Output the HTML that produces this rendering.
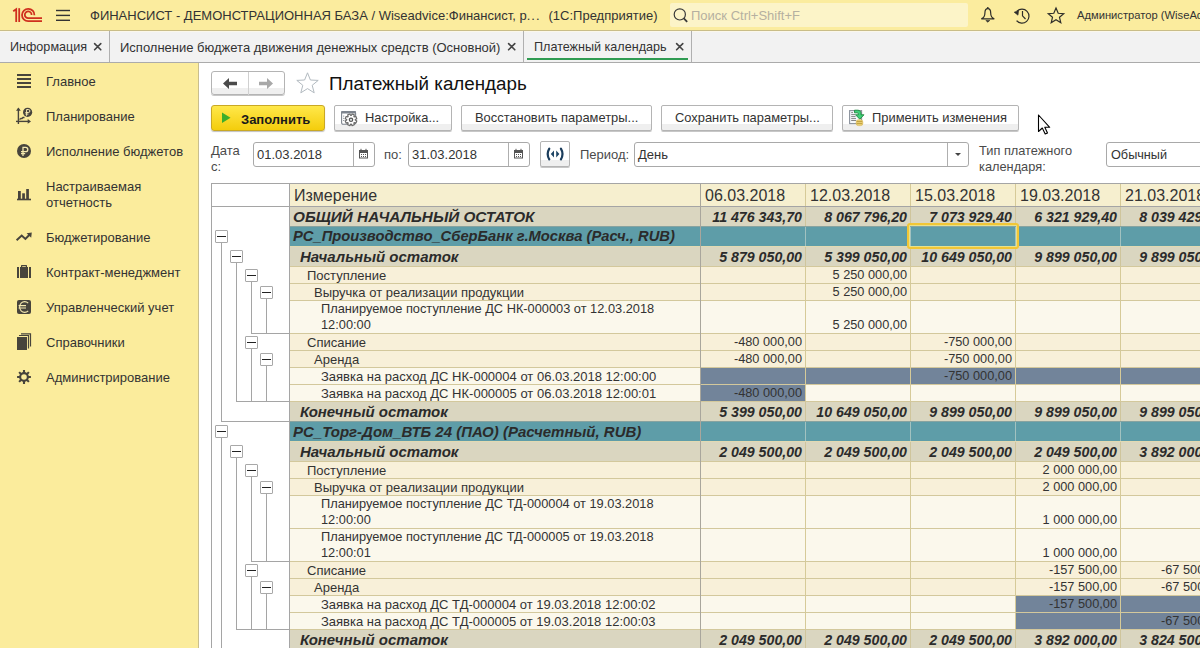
<!DOCTYPE html><html><head><meta charset="utf-8"><style>
*{box-sizing:border-box;margin:0;padding:0}
html,body{width:1200px;height:648px;overflow:hidden;background:#fff;font-family:"Liberation Sans",sans-serif;color:#333}
.abs{position:absolute}
.t{position:absolute;white-space:nowrap;line-height:1}
.btn{position:absolute;border:1px solid #B4B4B4;border-radius:2px;background:linear-gradient(#fff 0,#fff 74%,#EFEFEF 74%,#EFEFEF 100%);box-shadow:0 1px 0 rgba(0,0,0,.22)}
.fld{position:absolute;border:1px solid #A9A9A9;border-radius:3px;background:#fff}
.r{position:absolute;left:290px;width:910px}
.c{position:absolute;top:0;height:100%}
</style></head><body>

<div class="abs" style="left:0;top:0;width:1200px;height:31px;background:#FBEC9E;border-bottom:1px solid #C9BD88"></div>
<svg class="abs" style="left:0;top:0" width="80" height="30" viewBox="0 0 80 30">
<g fill="none" stroke="#CF2F1E" stroke-width="1.8">
<path d="M34.4 15.2 A6.2 6.2 0 1 0 28.2 21.2 H42"/>
<path d="M31.6 15 A3.4 3.4 0 1 0 28.2 18.2 H42"/>
<path d="M13.2 11.3 L16.2 9.2 V22"/>
<path d="M19.2 8.2 V22"/>
</g>
<g fill="#333"><rect x="56" y="9.8" width="14" height="1.4"/><rect x="56" y="14.7" width="14" height="1.4"/><rect x="56" y="19.6" width="14" height="1.4"/></g>
</svg>
<div class="t" style="left:90px;top:9px;font-size:13px;color:#333;white-space:pre">ФИНАНСИСТ - ДЕМОНСТРАЦИОННАЯ БАЗА / Wiseadvice:Финансист, р<span style="letter-spacing:1px">...</span></div>
<div class="t" style="left:548.5px;top:9px;font-size:13px;color:#333;white-space:pre">(1С:Предприятие)</div>
<div class="abs" style="left:670px;top:3px;width:298px;height:24px;background:#FCF4C8;border-radius:2px"></div>
<svg class="abs" style="left:670px;top:3px" width="24" height="24"><circle cx="9.8" cy="11.4" r="5.6" fill="none" stroke="#3A3A3A" stroke-width="1.2"/><path d="M13.8 15.4 L17.2 18.8" stroke="#3A3A3A" stroke-width="1.8"/></svg>
<div class="t" style="left:691px;top:9px;font-size:13px;color:#B5B0A0">Поиск Ctrl+Shift+F</div>
<svg class="abs" style="left:975px;top:3px" width="100" height="24" fill="none" stroke="#2E2E2A" stroke-width="1.2">
<path d="M12.8 5.6 C10.6 5.6 9.9 7.6 9.9 10 C9.9 13.6 9 14.9 6.3 15.9 H19.3 C16.6 14.9 15.7 13.6 15.7 10 C15.7 7.6 15 5.6 12.8 5.6 Z"/>
<path d="M10.8 17.4 H14.8 L12.8 19.2 Z" fill="#2E2E2A" stroke-width="0.6"/><circle cx="12.8" cy="4.8" r="0.9" fill="#2E2E2A" stroke="none"/>
<path d="M42 8.2 A7 7 0 1 1 41.6 17.6"/><path d="M47.5 8 V12.8 L50.5 16"/><path d="M39.2 9.2 L43.6 7.6 L43 12.2 Z" fill="#2E2E2A" stroke-width="0.6"/>
<path d="M81 5 L83.2 10.3 L88.7 10.7 L84.5 14.3 L85.8 19.8 L81 16.8 L76.2 19.8 L77.5 14.3 L73.3 10.7 L78.8 10.3 Z"/>
</svg>
<div class="t" style="left:1077px;top:9.5px;font-size:11.2px;color:#333">Администратор (WiseAdvice)</div>
<div class="abs" style="left:0;top:31px;width:1200px;height:32px;background:#F2F2F2;border-top:1px solid #FBF7EA;border-bottom:1px solid #ABABAB"></div>
<div class="t" style="left:10px;top:40.7px;font-size:12.6px;color:#333">Информация</div>
<svg class="abs" style="left:92px;top:42px" width="10" height="10"><path d="M2.6 1.6 L8.8 7.8 M8.8 1.6 L2.6 7.8" stroke="#444" stroke-width="1.6" stroke-linecap="round"/></svg>
<div class="abs" style="left:109px;top:31px;width:1px;height:31px;background:#B0B0B0"></div>
<div class="t" style="left:120px;top:40.7px;font-size:13px;color:#333">Исполнение бюджета движения денежных средств (Основной)</div>
<svg class="abs" style="left:506px;top:42px" width="10" height="10"><path d="M2.6 1.6 L8.8 7.8 M8.8 1.6 L2.6 7.8" stroke="#444" stroke-width="1.6" stroke-linecap="round"/></svg>
<div class="abs" style="left:523px;top:31px;width:1px;height:31px;background:#B0B0B0"></div>
<div class="t" style="left:534px;top:40.7px;font-size:12.6px;color:#333">Платежный календарь</div>
<svg class="abs" style="left:674px;top:42px" width="10" height="10"><path d="M2.6 1.6 L8.8 7.8 M8.8 1.6 L2.6 7.8" stroke="#444" stroke-width="1.6" stroke-linecap="round"/></svg>
<div class="abs" style="left:691px;top:31px;width:1px;height:31px;background:#B0B0B0"></div>
<div class="abs" style="left:527px;top:58px;width:161px;height:2px;background:#2F9B52"></div>
<div class="abs" style="left:0;top:63px;width:199px;height:585px;background:#FBEC9C;border-right:1px solid #C9BE8E"></div>
<div class="t" style="left:46px;top:75.4px;font-size:13px;color:#333">Главное</div>
<div class="t" style="left:46px;top:110.4px;font-size:13px;color:#333">Планирование</div>
<div class="t" style="left:46px;top:145.4px;font-size:13px;color:#333">Исполнение бюджетов</div>
<div class="abs" style="left:46px;top:179.3px;font-size:13px;line-height:16px;color:#333;white-space:nowrap">Настраиваемая<br>отчетность</div>
<div class="t" style="left:46px;top:231.4px;font-size:13px;color:#333">Бюджетирование</div>
<div class="t" style="left:46px;top:266.4px;font-size:13px;color:#333">Контракт-менеджмент</div>
<div class="t" style="left:46px;top:301.4px;font-size:13px;color:#333">Управленческий учет</div>
<div class="t" style="left:46px;top:336.4px;font-size:13px;color:#333">Справочники</div>
<div class="t" style="left:46px;top:371.4px;font-size:13px;color:#333">Администрирование</div>
<svg class="abs" style="left:0;top:62px" width="40" height="340">
<g fill="#47443C">
<rect x="17" y="12" width="14" height="2"/><rect x="17" y="16" width="14" height="2"/><rect x="17" y="20" width="14" height="2"/><rect x="17" y="24" width="14" height="2"/>
</g>
<g fill="none" stroke="#47443C" stroke-width="1.4">
<path d="M18.4 46.5 V62"/><path d="M16 59.4 H29"/><path d="M19.5 57.5 L21 56.5 L22 56.5 L23 55.5 L24.5 55.5"/>
</g>
<path d="M18.4 45.5 L16 48.8 H20.8 Z M31 59.4 L27.7 57 V61.8 Z" fill="#47443C"/>
<circle cx="27.6" cy="50.3" r="4.6" fill="#47443C"/>
<path d="M26.6 53.8 V47.5 H28.4 A1.5 1.5 0 0 1 28.4 50.5 H25.4 M25.4 52 H28.4" fill="none" stroke="#F5E9B0" stroke-width="1"/>
<circle cx="24" cy="89" r="7" fill="#47443C"/>
<path d="M23 94 V85.3 H25.6 A2.2 2.2 0 0 1 25.6 89.7 H21 M21 91.7 H25.2" fill="none" stroke="#F5E9B0" stroke-width="1.3"/>
<g fill="#47443C"><rect x="18" y="129" width="2.8" height="8.5"/><rect x="22.2" y="131.3" width="2.7" height="6.2"/><rect x="26.2" y="127" width="2.7" height="10.5"/><rect x="17" y="136.7" width="14" height="1.6"/></g>
<path d="M16.6 178.3 L21.7 173.6 L25.4 176.9 L29.5 172.8" fill="none" stroke="#47443C" stroke-width="2"/>
<path d="M31.8 170.6 L26.6 171.3 L31.2 175.7 Z" fill="#47443C"/>
<g fill="#47443C"><rect x="17" y="205" width="2" height="11" /><rect x="20" y="205" width="8" height="11"/><rect x="29" y="205" width="2" height="11"/><path d="M21 205 V203.4 Q21 203 21.6 203 H26.4 Q27 203 27 203.6 V205 H25.8 V204.2 H22.2 V205 Z"/></g>
<rect x="17" y="238" width="14" height="14" rx="2" fill="#47443C"/>
<path d="M28.2 241.2 A5 5.4 0 1 0 28.2 248.8 M18.6 243.6 H26 M18.6 246 H26" fill="none" stroke="#F5E9B0" stroke-width="1.1"/>
<rect x="17" y="275" width="10" height="13" fill="#47443C"/>
<path d="M28.5 286.5 V273.5 H19 M30.5 284.5 V271.8 H21" fill="none" stroke="#47443C" stroke-width="1.2"/>
</svg>
<svg class="abs" style="left:0;top:62px" width="40" height="340"><circle cx="24" cy="315" r="3.85" fill="none" stroke="#47443C" stroke-width="2.1"/><path d="M28.00 315.00 L30.90 315.00 M26.83 317.83 L28.88 319.88 M24.00 319.00 L24.00 321.90 M21.17 317.83 L19.12 319.88 M20.00 315.00 L17.10 315.00 M21.17 312.17 L19.12 310.12 M24.00 311.00 L24.00 308.10 M26.83 312.17 L28.88 310.12" stroke="#47443C" stroke-width="2.1"/></svg>
<div class="btn" style="left:211px;top:71px;width:74px;height:24px;border-radius:3px"></div>
<div class="abs" style="left:248px;top:72px;width:1px;height:23px;background:#D0D0D0"></div>
<svg class="abs" style="left:211px;top:71px" width="74" height="25">
<path d="M12 12.5 L18 7 V10.7 H26 V14.3 H18 V18 Z" fill="#4A4A4A"/>
<path d="M62 12.5 L56 7 V10.7 H48 V14.3 H56 V18 Z" fill="#A8A8A8"/>
</svg>
<svg class="abs" style="left:294px;top:70px" width="28" height="26"><path d="M13.5 2.8 L16.4 10 L24.2 10.4 L18.2 15.3 L20.2 22.8 L13.5 18.6 L6.8 22.8 L8.8 15.3 L2.8 10.4 L10.6 10 Z" fill="none" stroke="#B2BAC0" stroke-width="1"/></svg>
<div class="t" style="left:329px;top:75.2px;font-size:18.8px;color:#111">Платежный календарь</div>

<div class="abs" style="left:211px;top:105px;width:114px;height:26px;border:1px solid #C9A825;border-radius:3px;background:linear-gradient(#FFE84A,#F4CD0C);box-shadow:0 1px 1px rgba(0,0,0,.25)"></div>
<svg class="abs" style="left:211px;top:105px" width="30" height="26"><path d="M11 7.5 L19.5 12.8 L11 18 Z" fill="#3DAE2B"/></svg>
<div class="t" style="left:241px;top:112.5px;font-size:13px;font-weight:bold;color:#1A1A1A">Заполнить</div>

<div class="btn" style="left:334px;top:105px;width:118px;height:26px"></div>
<div class="t" style="left:365px;top:112.3px;font-size:12.9px;color:#333">Настройка...</div>
<svg class="abs" style="left:336px;top:106px" width="26" height="24">
<rect x="5.6" y="5.6" width="14" height="12.6" rx="1.5" fill="none" stroke="#7D848E" stroke-width="1.1"/>
<rect x="5" y="5" width="15" height="2.4" rx="1" fill="#7D848E"/>
<g fill="#7A808A"><rect x="7.2" y="9.6" width="1" height="1"/><rect x="7.2" y="11.8" width="1" height="1"/><rect x="7.2" y="14" width="1" height="1"/></g>
<path d="M19.29 14.03 L20.79 14.93 L19.89 17.10 L18.20 16.68 L17.88 17.00 L18.30 18.69 L16.13 19.59 L15.23 18.09 L14.77 18.09 L13.87 19.59 L11.70 18.69 L12.12 17.00 L11.80 16.68 L10.11 17.10 L9.21 14.93 L10.71 14.03 L10.71 13.57 L9.21 12.67 L10.11 10.50 L11.80 10.92 L12.12 10.60 L11.70 8.91 L13.87 8.01 L14.77 9.51 L15.23 9.51 L16.13 8.01 L18.30 8.91 L17.88 10.60 L18.20 10.92 L19.89 10.50 L20.79 12.67 L19.29 13.57 Z" fill="#fff" stroke="#6A6A6A" stroke-width="1.2" stroke-linejoin="round"/>
<circle cx="15" cy="13.8" r="1.7" fill="#DDE4E4" stroke="#555" stroke-width="1.2"/>
</svg>
<div class="btn" style="left:461px;top:105px;width:191px;height:26px"></div>
<div class="t" style="left:475px;top:112.3px;font-size:12.9px;color:#333">Восстановить параметры...</div>
<div class="btn" style="left:661px;top:105px;width:172px;height:26px"></div>
<div class="t" style="left:675px;top:112.3px;font-size:12.9px;color:#333">Сохранить параметры...</div>
<div class="btn" style="left:842px;top:105px;width:177px;height:26px"></div>
<div class="t" style="left:872px;top:112.3px;font-size:12.9px;color:#333">Применить изменения</div>
<svg class="abs" style="left:844px;top:106px" width="26" height="24">
<rect x="5.6" y="4.6" width="12" height="13" fill="#F6F9FC" stroke="#8A929C" stroke-width="1.1"/>
<path d="M7.2 6.6 H9 M7.2 8.6 H11.5 M7.2 10.6 H11.5 M7.2 12.6 H12 M7.2 14.5 H12" stroke="#777" stroke-width="0.9"/>
<path d="M10.5 4.2 H13.8 C16 4.2 17 5.6 17 7.8 V8.8 H20 L15.8 13.2 L11.6 8.8 H14.4 V8 C14.4 7.2 14 6.8 13.2 6.8 H10.5 Z" fill="#3FD07A" stroke="#1E8A3E" stroke-width="0.9" stroke-linejoin="round"/>
<rect x="12.2" y="13.8" width="6.6" height="5.8" rx="2.2" fill="#EAD27A" stroke="#D7B24A" stroke-width="0.6"/>
<path d="M12.8 15.6 H18.2 M12.8 17.6 H18.2" stroke="#B8962E" stroke-width="0.8"/>
</svg>
<svg class="abs" style="left:1036px;top:113px" width="18" height="24"><path d="M2.5 2 V18.5 L6.3 15 L9.2 21 L11.5 20 L8.8 14.3 L13.7 14.3 Z" fill="#fff" stroke="#000" stroke-width="1.1" stroke-linejoin="round"/></svg>
<div class="abs" style="left:211px;top:143px;font-size:13px;line-height:16px;color:#4A4A4A">Дата<br>с:</div>
<div class="fld" style="left:253px;top:142px;width:122px;height:25px"></div>
<div class="abs" style="left:353px;top:143px;width:1px;height:23px;background:#AFAFAF"></div>
<div class="t" style="left:257px;top:148px;font-size:13px;color:#333">01.03.2018</div>
<svg class="abs" style="left:358px;top:148px" width="12" height="12"><rect x="1" y="2" width="9" height="8.5" fill="#555"/><rect x="2" y="5" width="7" height="4.5" fill="#fff"/><g fill="#555"><rect x="3" y="6" width="1" height="1"/><rect x="5" y="6" width="1" height="1"/><rect x="7" y="6" width="1" height="1"/><rect x="3" y="8" width="1" height="1"/><rect x="5" y="8" width="1" height="1"/><rect x="7" y="8" width="1" height="1"/></g><rect x="2.5" y="0.8" width="1" height="2" fill="#555"/><rect x="7.5" y="0.8" width="1" height="2" fill="#555"/></svg>
<div class="t" style="left:384px;top:148px;font-size:13px;color:#4A4A4A">по:</div>
<div class="fld" style="left:408px;top:142px;width:122px;height:25px"></div>
<div class="abs" style="left:508px;top:143px;width:1px;height:23px;background:#AFAFAF"></div>
<div class="t" style="left:412px;top:148px;font-size:13px;color:#333">31.03.2018</div>
<svg class="abs" style="left:513px;top:148px" width="12" height="12"><rect x="1" y="2" width="9" height="8.5" fill="#555"/><rect x="2" y="5" width="7" height="4.5" fill="#fff"/><g fill="#555"><rect x="3" y="6" width="1" height="1"/><rect x="5" y="6" width="1" height="1"/><rect x="7" y="6" width="1" height="1"/><rect x="3" y="8" width="1" height="1"/><rect x="5" y="8" width="1" height="1"/><rect x="7" y="8" width="1" height="1"/></g><rect x="2.5" y="0.8" width="1" height="2" fill="#555"/><rect x="7.5" y="0.8" width="1" height="2" fill="#555"/></svg>
<div class="btn" style="left:540px;top:141px;width:30px;height:26px"></div>
<svg class="abs" style="left:540px;top:141px" width="30" height="26"><path d="M9.3 7.6 Q6.1 13 9.3 18.4 M20.9 7.6 Q24.1 13 20.9 18.4" fill="none" stroke="#1B3D5C" stroke-width="2.2" stroke-linecap="round"/><path d="M14 9.4 L10.8 13 L14 16.4 Z M16.2 9.4 L19.4 13 L16.2 16.4 Z" fill="#1F4666"/></svg>
<div class="t" style="left:580px;top:148px;font-size:13px;color:#4A4A4A">Период:</div>
<div class="fld" style="left:634px;top:142px;width:335px;height:25px"></div>
<div class="abs" style="left:947px;top:143px;width:1px;height:23px;background:#AFAFAF"></div>
<div class="t" style="left:638px;top:148px;font-size:13px;color:#333">День</div>
<svg class="abs" style="left:952.5px;top:150px" width="10" height="8"><path d="M2 3 H8 L5 6 Z" fill="#444"/></svg>
<div class="abs" style="left:979px;top:142.8px;font-size:12.8px;line-height:16px;color:#4A4A4A;white-space:nowrap">Тип платежного<br>календаря:</div>
<div class="fld" style="left:1106px;top:142px;width:110px;height:25px"></div>
<div class="t" style="left:1111px;top:148.8px;font-size:12.7px;color:#333">Обычный</div>
<div class="abs" style="left:211px;top:183px;width:989px;height:465px;background:#fff;border-left:1px solid #A5A5A5;border-top:1px solid #A5A5A5"></div>
<div class="abs" style="left:290px;top:184px;width:910px;height:22px;background:#F6EFCF"></div>
<div class="abs" style="left:211px;top:206px;width:989px;height:1px;background:#A5A5A5"></div>
<div class="t" style="left:294px;top:188px;font-size:16px;color:#333">Измерение</div>
<div class="t" style="left:705px;top:188px;font-size:16px;color:#333">06.03.2018</div>
<div class="t" style="left:810px;top:188px;font-size:16px;color:#333">12.03.2018</div>
<div class="t" style="left:915px;top:188px;font-size:16px;color:#333">15.03.2018</div>
<div class="t" style="left:1020px;top:188px;font-size:16px;color:#333">19.03.2018</div>
<div class="t" style="left:1125px;top:188px;font-size:16px;color:#333">21.03.2018</div>
<div class="abs" style="left:290px;top:207px;width:910px;height:20px;background:#DAD6C0"></div>
<div class="abs" style="left:290px;top:226px;width:910px;height:1px;background:#87A3A0"></div>
<div class="abs" style="left:805px;top:207px;width:1px;height:19px;background:#CFC59C"></div>
<div class="abs" style="left:910px;top:207px;width:1px;height:19px;background:#CFC59C"></div>
<div class="abs" style="left:1015px;top:207px;width:1px;height:19px;background:#CFC59C"></div>
<div class="abs" style="left:1120px;top:207px;width:1px;height:19px;background:#CFC59C"></div>
<div class="t" style="left:293px;top:208.875px;font-size:15.3px;font-weight:bold;font-style:italic;color:#2B2B2B">ОБЩИЙ НАЧАЛЬНЫЙ ОСТАТОК</div>
<div class="t" style="right:398px;top:209.8px;font-size:14.2px;font-weight:bold;font-style:italic;color:#2B2B2B">11 476 343,70</div>
<div class="t" style="right:293px;top:209.8px;font-size:14.2px;font-weight:bold;font-style:italic;color:#2B2B2B">8 067 796,20</div>
<div class="t" style="right:188px;top:209.8px;font-size:14.2px;font-weight:bold;font-style:italic;color:#2B2B2B">7 073 929,40</div>
<div class="t" style="right:83px;top:209.8px;font-size:14.2px;font-weight:bold;font-style:italic;color:#2B2B2B">6 321 929,40</div>
<div class="t" style="right:-22px;top:209.8px;font-size:14.2px;font-weight:bold;font-style:italic;color:#2B2B2B">8 039 429,40</div>
<div class="abs" style="left:290px;top:227px;width:910px;height:20px;background:#5E9DA8"></div>
<div class="abs" style="left:290px;top:246px;width:910px;height:1px;background:#E2DAB2"></div>
<div class="abs" style="left:805px;top:227px;width:1px;height:19px;background:#A2C2C0"></div>
<div class="abs" style="left:910px;top:227px;width:1px;height:19px;background:#A2C2C0"></div>
<div class="abs" style="left:1015px;top:227px;width:1px;height:19px;background:#A2C2C0"></div>
<div class="abs" style="left:1120px;top:227px;width:1px;height:19px;background:#A2C2C0"></div>
<div class="t" style="left:293px;top:229.3425px;font-size:14.75px;font-weight:bold;font-style:italic;color:#2B2B2B">РС_Производство_СберБанк г.Москва (Расч., RUB)</div>
<div class="abs" style="left:290px;top:247px;width:910px;height:20px;background:#DAD6C0"></div>
<div class="abs" style="left:290px;top:266px;width:910px;height:1px;background:#D3C89C"></div>
<div class="abs" style="left:805px;top:247px;width:1px;height:19px;background:#CFC59C"></div>
<div class="abs" style="left:910px;top:247px;width:1px;height:19px;background:#CFC59C"></div>
<div class="abs" style="left:1015px;top:247px;width:1px;height:19px;background:#CFC59C"></div>
<div class="abs" style="left:1120px;top:247px;width:1px;height:19px;background:#CFC59C"></div>
<div class="t" style="left:300px;top:249.13000000000002px;font-size:15px;font-weight:bold;font-style:italic;color:#2B2B2B">Начальный остаток</div>
<div class="t" style="right:398px;top:249.8px;font-size:14.2px;font-weight:bold;font-style:italic;color:#2B2B2B">5 879 050,00</div>
<div class="t" style="right:293px;top:249.8px;font-size:14.2px;font-weight:bold;font-style:italic;color:#2B2B2B">5 399 050,00</div>
<div class="t" style="right:188px;top:249.8px;font-size:14.2px;font-weight:bold;font-style:italic;color:#2B2B2B">10 649 050,00</div>
<div class="t" style="right:83px;top:249.8px;font-size:14.2px;font-weight:bold;font-style:italic;color:#2B2B2B">9 899 050,00</div>
<div class="t" style="right:-22px;top:249.8px;font-size:14.2px;font-weight:bold;font-style:italic;color:#2B2B2B">9 899 050,00</div>
<div class="abs" style="left:290px;top:267px;width:910px;height:17px;background:#F8F0D9"></div>
<div class="abs" style="left:290px;top:283px;width:910px;height:1px;background:#D3C89C"></div>
<div class="abs" style="left:805px;top:267px;width:1px;height:16px;background:#D6CA98"></div>
<div class="abs" style="left:910px;top:267px;width:1px;height:16px;background:#D6CA98"></div>
<div class="abs" style="left:1015px;top:267px;width:1px;height:16px;background:#D6CA98"></div>
<div class="abs" style="left:1120px;top:267px;width:1px;height:16px;background:#D6CA98"></div>
<div class="t" style="left:307px;top:268.5px;font-size:13px;color:#333">Поступление</div>
<div class="t" style="right:293px;top:268.5px;font-size:12.75px;color:#333">5 250 000,00</div>
<div class="abs" style="left:290px;top:284px;width:910px;height:17px;background:#F8F0D9"></div>
<div class="abs" style="left:290px;top:300px;width:910px;height:1px;background:#D3C89C"></div>
<div class="abs" style="left:805px;top:284px;width:1px;height:16px;background:#D6CA98"></div>
<div class="abs" style="left:910px;top:284px;width:1px;height:16px;background:#D6CA98"></div>
<div class="abs" style="left:1015px;top:284px;width:1px;height:16px;background:#D6CA98"></div>
<div class="abs" style="left:1120px;top:284px;width:1px;height:16px;background:#D6CA98"></div>
<div class="t" style="left:314px;top:285.5px;font-size:13px;color:#333">Выручка от реализации продукции</div>
<div class="t" style="right:293px;top:285.5px;font-size:12.75px;color:#333">5 250 000,00</div>
<div class="abs" style="left:290px;top:301px;width:910px;height:33px;background:#FBF8EC"></div>
<div class="abs" style="left:290px;top:333px;width:910px;height:1px;background:#D3C89C"></div>
<div class="abs" style="left:805px;top:301px;width:1px;height:32px;background:#D6CA98"></div>
<div class="abs" style="left:910px;top:301px;width:1px;height:32px;background:#D6CA98"></div>
<div class="abs" style="left:1015px;top:301px;width:1px;height:32px;background:#D6CA98"></div>
<div class="abs" style="left:1120px;top:301px;width:1px;height:32px;background:#D6CA98"></div>
<div class="abs" style="left:321px;top:301.4px;font-size:12.8px;line-height:15.8px;color:#333;white-space:nowrap">Планируемое поступление ДС НК-000003 от 12.03.2018<br>12:00:00</div>
<div class="t" style="right:293px;top:318.5px;font-size:12.75px;color:#333">5 250 000,00</div>
<div class="abs" style="left:290px;top:334px;width:910px;height:17px;background:#F8F0D9"></div>
<div class="abs" style="left:290px;top:350px;width:910px;height:1px;background:#D3C89C"></div>
<div class="abs" style="left:805px;top:334px;width:1px;height:16px;background:#D6CA98"></div>
<div class="abs" style="left:910px;top:334px;width:1px;height:16px;background:#D6CA98"></div>
<div class="abs" style="left:1015px;top:334px;width:1px;height:16px;background:#D6CA98"></div>
<div class="abs" style="left:1120px;top:334px;width:1px;height:16px;background:#D6CA98"></div>
<div class="t" style="left:307px;top:335.5px;font-size:13px;color:#333">Списание</div>
<div class="t" style="right:398px;top:335.5px;font-size:12.75px;color:#333">-480 000,00</div>
<div class="t" style="right:188px;top:335.5px;font-size:12.75px;color:#333">-750 000,00</div>
<div class="abs" style="left:290px;top:351px;width:910px;height:17px;background:#F8F0D9"></div>
<div class="abs" style="left:290px;top:367px;width:910px;height:1px;background:#D3C89C"></div>
<div class="abs" style="left:805px;top:351px;width:1px;height:16px;background:#D6CA98"></div>
<div class="abs" style="left:910px;top:351px;width:1px;height:16px;background:#D6CA98"></div>
<div class="abs" style="left:1015px;top:351px;width:1px;height:16px;background:#D6CA98"></div>
<div class="abs" style="left:1120px;top:351px;width:1px;height:16px;background:#D6CA98"></div>
<div class="t" style="left:314px;top:352.5px;font-size:13px;color:#333">Аренда</div>
<div class="t" style="right:398px;top:352.5px;font-size:12.75px;color:#333">-480 000,00</div>
<div class="t" style="right:188px;top:352.5px;font-size:12.75px;color:#333">-750 000,00</div>
<div class="abs" style="left:290px;top:368px;width:910px;height:17px;background:#FBF8EC"></div>
<div class="abs" style="left:701px;top:368px;width:104px;height:16px;background:#72849A"></div>
<div class="abs" style="left:806px;top:368px;width:104px;height:16px;background:#72849A"></div>
<div class="abs" style="left:911px;top:368px;width:104px;height:16px;background:#72849A"></div>
<div class="abs" style="left:1016px;top:368px;width:104px;height:16px;background:#72849A"></div>
<div class="abs" style="left:1121px;top:368px;width:79px;height:16px;background:#72849A"></div>
<div class="abs" style="left:290px;top:384px;width:910px;height:1px;background:#D3C89C"></div>
<div class="abs" style="left:805px;top:368px;width:1px;height:16px;background:#D6CA98"></div>
<div class="abs" style="left:910px;top:368px;width:1px;height:16px;background:#D6CA98"></div>
<div class="abs" style="left:1015px;top:368px;width:1px;height:16px;background:#D6CA98"></div>
<div class="abs" style="left:1120px;top:368px;width:1px;height:16px;background:#D6CA98"></div>
<div class="t" style="left:321px;top:369.5px;font-size:13px;color:#333">Заявка на расход ДС НК-000004 от 06.03.2018 12:00:00</div>
<div class="t" style="right:188px;top:369.5px;font-size:12.75px;color:#333">-750 000,00</div>
<div class="abs" style="left:290px;top:385px;width:910px;height:17px;background:#FBF8EC"></div>
<div class="abs" style="left:701px;top:385px;width:104px;height:16px;background:#72849A"></div>
<div class="abs" style="left:290px;top:401px;width:910px;height:1px;background:#D3C89C"></div>
<div class="abs" style="left:805px;top:385px;width:1px;height:16px;background:#D6CA98"></div>
<div class="abs" style="left:910px;top:385px;width:1px;height:16px;background:#D6CA98"></div>
<div class="abs" style="left:1015px;top:385px;width:1px;height:16px;background:#D6CA98"></div>
<div class="abs" style="left:1120px;top:385px;width:1px;height:16px;background:#D6CA98"></div>
<div class="t" style="left:321px;top:386.5px;font-size:13px;color:#333">Заявка на расход ДС НК-000005 от 06.03.2018 12:00:01</div>
<div class="t" style="right:398px;top:386.5px;font-size:12.75px;color:#333">-480 000,00</div>
<div class="abs" style="left:290px;top:402px;width:910px;height:20px;background:#DAD6C0"></div>
<div class="abs" style="left:290px;top:421px;width:910px;height:1px;background:#87A3A0"></div>
<div class="abs" style="left:805px;top:402px;width:1px;height:19px;background:#CFC59C"></div>
<div class="abs" style="left:910px;top:402px;width:1px;height:19px;background:#CFC59C"></div>
<div class="abs" style="left:1015px;top:402px;width:1px;height:19px;background:#CFC59C"></div>
<div class="abs" style="left:1120px;top:402px;width:1px;height:19px;background:#CFC59C"></div>
<div class="t" style="left:300px;top:404.13px;font-size:15px;font-weight:bold;font-style:italic;color:#2B2B2B">Конечный остаток</div>
<div class="t" style="right:398px;top:404.8px;font-size:14.2px;font-weight:bold;font-style:italic;color:#2B2B2B">5 399 050,00</div>
<div class="t" style="right:293px;top:404.8px;font-size:14.2px;font-weight:bold;font-style:italic;color:#2B2B2B">10 649 050,00</div>
<div class="t" style="right:188px;top:404.8px;font-size:14.2px;font-weight:bold;font-style:italic;color:#2B2B2B">9 899 050,00</div>
<div class="t" style="right:83px;top:404.8px;font-size:14.2px;font-weight:bold;font-style:italic;color:#2B2B2B">9 899 050,00</div>
<div class="t" style="right:-22px;top:404.8px;font-size:14.2px;font-weight:bold;font-style:italic;color:#2B2B2B">9 899 050,00</div>
<div class="abs" style="left:290px;top:422px;width:910px;height:20px;background:#5E9DA8"></div>
<div class="abs" style="left:290px;top:441px;width:910px;height:1px;background:#E2DAB2"></div>
<div class="abs" style="left:805px;top:422px;width:1px;height:19px;background:#A2C2C0"></div>
<div class="abs" style="left:910px;top:422px;width:1px;height:19px;background:#A2C2C0"></div>
<div class="abs" style="left:1015px;top:422px;width:1px;height:19px;background:#A2C2C0"></div>
<div class="abs" style="left:1120px;top:422px;width:1px;height:19px;background:#A2C2C0"></div>
<div class="t" style="left:293px;top:424.13px;font-size:15px;font-weight:bold;font-style:italic;color:#2B2B2B">РС_Торг-Дом_ВТБ 24 (ПАО) (Расчетный, RUB)</div>
<div class="abs" style="left:290px;top:442px;width:910px;height:20px;background:#DAD6C0"></div>
<div class="abs" style="left:290px;top:461px;width:910px;height:1px;background:#D3C89C"></div>
<div class="abs" style="left:805px;top:442px;width:1px;height:19px;background:#CFC59C"></div>
<div class="abs" style="left:910px;top:442px;width:1px;height:19px;background:#CFC59C"></div>
<div class="abs" style="left:1015px;top:442px;width:1px;height:19px;background:#CFC59C"></div>
<div class="abs" style="left:1120px;top:442px;width:1px;height:19px;background:#CFC59C"></div>
<div class="t" style="left:300px;top:444.13px;font-size:15px;font-weight:bold;font-style:italic;color:#2B2B2B">Начальный остаток</div>
<div class="t" style="right:398px;top:444.8px;font-size:14.2px;font-weight:bold;font-style:italic;color:#2B2B2B">2 049 500,00</div>
<div class="t" style="right:293px;top:444.8px;font-size:14.2px;font-weight:bold;font-style:italic;color:#2B2B2B">2 049 500,00</div>
<div class="t" style="right:188px;top:444.8px;font-size:14.2px;font-weight:bold;font-style:italic;color:#2B2B2B">2 049 500,00</div>
<div class="t" style="right:83px;top:444.8px;font-size:14.2px;font-weight:bold;font-style:italic;color:#2B2B2B">2 049 500,00</div>
<div class="t" style="right:-22px;top:444.8px;font-size:14.2px;font-weight:bold;font-style:italic;color:#2B2B2B">3 892 000,00</div>
<div class="abs" style="left:290px;top:462px;width:910px;height:17px;background:#F8F0D9"></div>
<div class="abs" style="left:290px;top:478px;width:910px;height:1px;background:#D3C89C"></div>
<div class="abs" style="left:805px;top:462px;width:1px;height:16px;background:#D6CA98"></div>
<div class="abs" style="left:910px;top:462px;width:1px;height:16px;background:#D6CA98"></div>
<div class="abs" style="left:1015px;top:462px;width:1px;height:16px;background:#D6CA98"></div>
<div class="abs" style="left:1120px;top:462px;width:1px;height:16px;background:#D6CA98"></div>
<div class="t" style="left:307px;top:463.5px;font-size:13px;color:#333">Поступление</div>
<div class="t" style="right:83px;top:463.5px;font-size:12.75px;color:#333">2 000 000,00</div>
<div class="abs" style="left:290px;top:479px;width:910px;height:17px;background:#F8F0D9"></div>
<div class="abs" style="left:290px;top:495px;width:910px;height:1px;background:#D3C89C"></div>
<div class="abs" style="left:805px;top:479px;width:1px;height:16px;background:#D6CA98"></div>
<div class="abs" style="left:910px;top:479px;width:1px;height:16px;background:#D6CA98"></div>
<div class="abs" style="left:1015px;top:479px;width:1px;height:16px;background:#D6CA98"></div>
<div class="abs" style="left:1120px;top:479px;width:1px;height:16px;background:#D6CA98"></div>
<div class="t" style="left:314px;top:480.5px;font-size:13px;color:#333">Выручка от реализации продукции</div>
<div class="t" style="right:83px;top:480.5px;font-size:12.75px;color:#333">2 000 000,00</div>
<div class="abs" style="left:290px;top:496px;width:910px;height:33px;background:#FBF8EC"></div>
<div class="abs" style="left:290px;top:528px;width:910px;height:1px;background:#D3C89C"></div>
<div class="abs" style="left:805px;top:496px;width:1px;height:32px;background:#D6CA98"></div>
<div class="abs" style="left:910px;top:496px;width:1px;height:32px;background:#D6CA98"></div>
<div class="abs" style="left:1015px;top:496px;width:1px;height:32px;background:#D6CA98"></div>
<div class="abs" style="left:1120px;top:496px;width:1px;height:32px;background:#D6CA98"></div>
<div class="abs" style="left:321px;top:496.4px;font-size:12.8px;line-height:15.8px;color:#333;white-space:nowrap">Планируемое поступление ДС ТД-000004 от 19.03.2018<br>12:00:00</div>
<div class="t" style="right:83px;top:513.5px;font-size:12.75px;color:#333">1 000 000,00</div>
<div class="abs" style="left:290px;top:529px;width:910px;height:33px;background:#FBF8EC"></div>
<div class="abs" style="left:290px;top:561px;width:910px;height:1px;background:#D3C89C"></div>
<div class="abs" style="left:805px;top:529px;width:1px;height:32px;background:#D6CA98"></div>
<div class="abs" style="left:910px;top:529px;width:1px;height:32px;background:#D6CA98"></div>
<div class="abs" style="left:1015px;top:529px;width:1px;height:32px;background:#D6CA98"></div>
<div class="abs" style="left:1120px;top:529px;width:1px;height:32px;background:#D6CA98"></div>
<div class="abs" style="left:321px;top:529.4px;font-size:12.8px;line-height:15.8px;color:#333;white-space:nowrap">Планируемое поступление ДС ТД-000005 от 19.03.2018<br>12:00:01</div>
<div class="t" style="right:83px;top:546.5px;font-size:12.75px;color:#333">1 000 000,00</div>
<div class="abs" style="left:290px;top:562px;width:910px;height:17px;background:#F8F0D9"></div>
<div class="abs" style="left:290px;top:578px;width:910px;height:1px;background:#D3C89C"></div>
<div class="abs" style="left:805px;top:562px;width:1px;height:16px;background:#D6CA98"></div>
<div class="abs" style="left:910px;top:562px;width:1px;height:16px;background:#D6CA98"></div>
<div class="abs" style="left:1015px;top:562px;width:1px;height:16px;background:#D6CA98"></div>
<div class="abs" style="left:1120px;top:562px;width:1px;height:16px;background:#D6CA98"></div>
<div class="t" style="left:307px;top:563.5px;font-size:13px;color:#333">Списание</div>
<div class="t" style="right:83px;top:563.5px;font-size:12.75px;color:#333">-157 500,00</div>
<div class="t" style="right:-22px;top:563.5px;font-size:12.75px;color:#333">-67 500,00</div>
<div class="abs" style="left:290px;top:579px;width:910px;height:17px;background:#F8F0D9"></div>
<div class="abs" style="left:290px;top:595px;width:910px;height:1px;background:#D3C89C"></div>
<div class="abs" style="left:805px;top:579px;width:1px;height:16px;background:#D6CA98"></div>
<div class="abs" style="left:910px;top:579px;width:1px;height:16px;background:#D6CA98"></div>
<div class="abs" style="left:1015px;top:579px;width:1px;height:16px;background:#D6CA98"></div>
<div class="abs" style="left:1120px;top:579px;width:1px;height:16px;background:#D6CA98"></div>
<div class="t" style="left:314px;top:580.5px;font-size:13px;color:#333">Аренда</div>
<div class="t" style="right:83px;top:580.5px;font-size:12.75px;color:#333">-157 500,00</div>
<div class="t" style="right:-22px;top:580.5px;font-size:12.75px;color:#333">-67 500,00</div>
<div class="abs" style="left:290px;top:596px;width:910px;height:17px;background:#FBF8EC"></div>
<div class="abs" style="left:1016px;top:596px;width:104px;height:16px;background:#72849A"></div>
<div class="abs" style="left:1121px;top:596px;width:79px;height:16px;background:#72849A"></div>
<div class="abs" style="left:290px;top:612px;width:910px;height:1px;background:#D3C89C"></div>
<div class="abs" style="left:805px;top:596px;width:1px;height:16px;background:#D6CA98"></div>
<div class="abs" style="left:910px;top:596px;width:1px;height:16px;background:#D6CA98"></div>
<div class="abs" style="left:1015px;top:596px;width:1px;height:16px;background:#D6CA98"></div>
<div class="abs" style="left:1120px;top:596px;width:1px;height:16px;background:#D6CA98"></div>
<div class="t" style="left:321px;top:597.5px;font-size:13px;color:#333">Заявка на расход ДС ТД-000004 от 19.03.2018 12:00:02</div>
<div class="t" style="right:83px;top:597.5px;font-size:12.75px;color:#333">-157 500,00</div>
<div class="abs" style="left:290px;top:613px;width:910px;height:17px;background:#FBF8EC"></div>
<div class="abs" style="left:1016px;top:613px;width:104px;height:16px;background:#72849A"></div>
<div class="abs" style="left:1121px;top:613px;width:79px;height:16px;background:#72849A"></div>
<div class="abs" style="left:290px;top:629px;width:910px;height:1px;background:#D3C89C"></div>
<div class="abs" style="left:805px;top:613px;width:1px;height:16px;background:#D6CA98"></div>
<div class="abs" style="left:910px;top:613px;width:1px;height:16px;background:#D6CA98"></div>
<div class="abs" style="left:1015px;top:613px;width:1px;height:16px;background:#D6CA98"></div>
<div class="abs" style="left:1120px;top:613px;width:1px;height:16px;background:#D6CA98"></div>
<div class="t" style="left:321px;top:614.5px;font-size:13px;color:#333">Заявка на расход ДС ТД-000005 от 19.03.2018 12:00:03</div>
<div class="t" style="right:-22px;top:614.5px;font-size:12.75px;color:#333">-67 500,00</div>
<div class="abs" style="left:290px;top:630px;width:910px;height:20px;background:#DAD6C0"></div>
<div class="abs" style="left:290px;top:649px;width:910px;height:1px;background:#D3C89C"></div>
<div class="abs" style="left:805px;top:630px;width:1px;height:19px;background:#CFC59C"></div>
<div class="abs" style="left:910px;top:630px;width:1px;height:19px;background:#CFC59C"></div>
<div class="abs" style="left:1015px;top:630px;width:1px;height:19px;background:#CFC59C"></div>
<div class="abs" style="left:1120px;top:630px;width:1px;height:19px;background:#CFC59C"></div>
<div class="t" style="left:300px;top:632.13px;font-size:15px;font-weight:bold;font-style:italic;color:#2B2B2B">Конечный остаток</div>
<div class="t" style="right:398px;top:632.8px;font-size:14.2px;font-weight:bold;font-style:italic;color:#2B2B2B">2 049 500,00</div>
<div class="t" style="right:293px;top:632.8px;font-size:14.2px;font-weight:bold;font-style:italic;color:#2B2B2B">2 049 500,00</div>
<div class="t" style="right:188px;top:632.8px;font-size:14.2px;font-weight:bold;font-style:italic;color:#2B2B2B">2 049 500,00</div>
<div class="t" style="right:83px;top:632.8px;font-size:14.2px;font-weight:bold;font-style:italic;color:#2B2B2B">3 892 000,00</div>
<div class="t" style="right:-22px;top:632.8px;font-size:14.2px;font-weight:bold;font-style:italic;color:#2B2B2B">3 824 500,00</div>
<div class="abs" style="left:805px;top:184px;width:1px;height:22px;background:#D6CA98"></div>
<div class="abs" style="left:910px;top:184px;width:1px;height:22px;background:#D6CA98"></div>
<div class="abs" style="left:1015px;top:184px;width:1px;height:22px;background:#D6CA98"></div>
<div class="abs" style="left:1120px;top:184px;width:1px;height:22px;background:#D6CA98"></div>
<div class="abs" style="left:700px;top:184px;width:1px;height:464px;background:#A9A69C"></div>
<div class="abs" style="left:289px;top:184px;width:1px;height:464px;background:#A5A5A5"></div>
<div class="abs" style="left:907px;top:223px;width:112px;height:26px;border:2px solid #F1C636;border-radius:3px;box-shadow:inset 0 0 0 1px #E6E28C"></div>
<div class="abs" style="left:221px;top:243px;width:1px;height:178px;background:#A5A5A5"></div>
<div class="abs" style="left:221px;top:421px;width:68px;height:1px;background:#A5A5A5"></div>
<div class="abs" style="left:236px;top:263px;width:1px;height:138px;background:#A5A5A5"></div>
<div class="abs" style="left:236px;top:401px;width:53px;height:1px;background:#A5A5A5"></div>
<div class="abs" style="left:251px;top:282px;width:1px;height:51px;background:#A5A5A5"></div>
<div class="abs" style="left:251px;top:333px;width:38px;height:1px;background:#A5A5A5"></div>
<div class="abs" style="left:266px;top:299px;width:1px;height:34px;background:#A5A5A5"></div>
<div class="abs" style="left:251px;top:349px;width:1px;height:52px;background:#A5A5A5"></div>
<div class="abs" style="left:266px;top:366px;width:1px;height:35px;background:#A5A5A5"></div>
<div class="abs" style="left:215px;top:230px;width:13px;height:13px;border:1px solid #A8A8A8;border-radius:1px;background:#fff"></div><div class="abs" style="left:217px;top:236px;width:9px;height:1px;background:#222"></div>
<div class="abs" style="left:230px;top:250px;width:13px;height:13px;border:1px solid #A8A8A8;border-radius:1px;background:#fff"></div><div class="abs" style="left:232px;top:256px;width:9px;height:1px;background:#222"></div>
<div class="abs" style="left:245px;top:269px;width:13px;height:13px;border:1px solid #A8A8A8;border-radius:1px;background:#fff"></div><div class="abs" style="left:247px;top:275px;width:9px;height:1px;background:#222"></div>
<div class="abs" style="left:260px;top:286px;width:13px;height:13px;border:1px solid #A8A8A8;border-radius:1px;background:#fff"></div><div class="abs" style="left:262px;top:292px;width:9px;height:1px;background:#222"></div>
<div class="abs" style="left:245px;top:336px;width:13px;height:13px;border:1px solid #A8A8A8;border-radius:1px;background:#fff"></div><div class="abs" style="left:247px;top:342px;width:9px;height:1px;background:#222"></div>
<div class="abs" style="left:260px;top:353px;width:13px;height:13px;border:1px solid #A8A8A8;border-radius:1px;background:#fff"></div><div class="abs" style="left:262px;top:359px;width:9px;height:1px;background:#222"></div>
<div class="abs" style="left:221px;top:438px;width:1px;height:210px;background:#A5A5A5"></div>
<div class="abs" style="left:236px;top:458px;width:1px;height:171px;background:#A5A5A5"></div>
<div class="abs" style="left:236px;top:629px;width:53px;height:1px;background:#A5A5A5"></div>
<div class="abs" style="left:251px;top:477px;width:1px;height:84px;background:#A5A5A5"></div>
<div class="abs" style="left:251px;top:561px;width:38px;height:1px;background:#A5A5A5"></div>
<div class="abs" style="left:266px;top:494px;width:1px;height:67px;background:#A5A5A5"></div>
<div class="abs" style="left:251px;top:577px;width:1px;height:52px;background:#A5A5A5"></div>
<div class="abs" style="left:266px;top:594px;width:1px;height:35px;background:#A5A5A5"></div>
<div class="abs" style="left:215px;top:425px;width:13px;height:13px;border:1px solid #A8A8A8;border-radius:1px;background:#fff"></div><div class="abs" style="left:217px;top:431px;width:9px;height:1px;background:#222"></div>
<div class="abs" style="left:230px;top:445px;width:13px;height:13px;border:1px solid #A8A8A8;border-radius:1px;background:#fff"></div><div class="abs" style="left:232px;top:451px;width:9px;height:1px;background:#222"></div>
<div class="abs" style="left:245px;top:464px;width:13px;height:13px;border:1px solid #A8A8A8;border-radius:1px;background:#fff"></div><div class="abs" style="left:247px;top:470px;width:9px;height:1px;background:#222"></div>
<div class="abs" style="left:260px;top:481px;width:13px;height:13px;border:1px solid #A8A8A8;border-radius:1px;background:#fff"></div><div class="abs" style="left:262px;top:487px;width:9px;height:1px;background:#222"></div>
<div class="abs" style="left:245px;top:564px;width:13px;height:13px;border:1px solid #A8A8A8;border-radius:1px;background:#fff"></div><div class="abs" style="left:247px;top:570px;width:9px;height:1px;background:#222"></div>
<div class="abs" style="left:260px;top:581px;width:13px;height:13px;border:1px solid #A8A8A8;border-radius:1px;background:#fff"></div><div class="abs" style="left:262px;top:587px;width:9px;height:1px;background:#222"></div>
</body></html>
